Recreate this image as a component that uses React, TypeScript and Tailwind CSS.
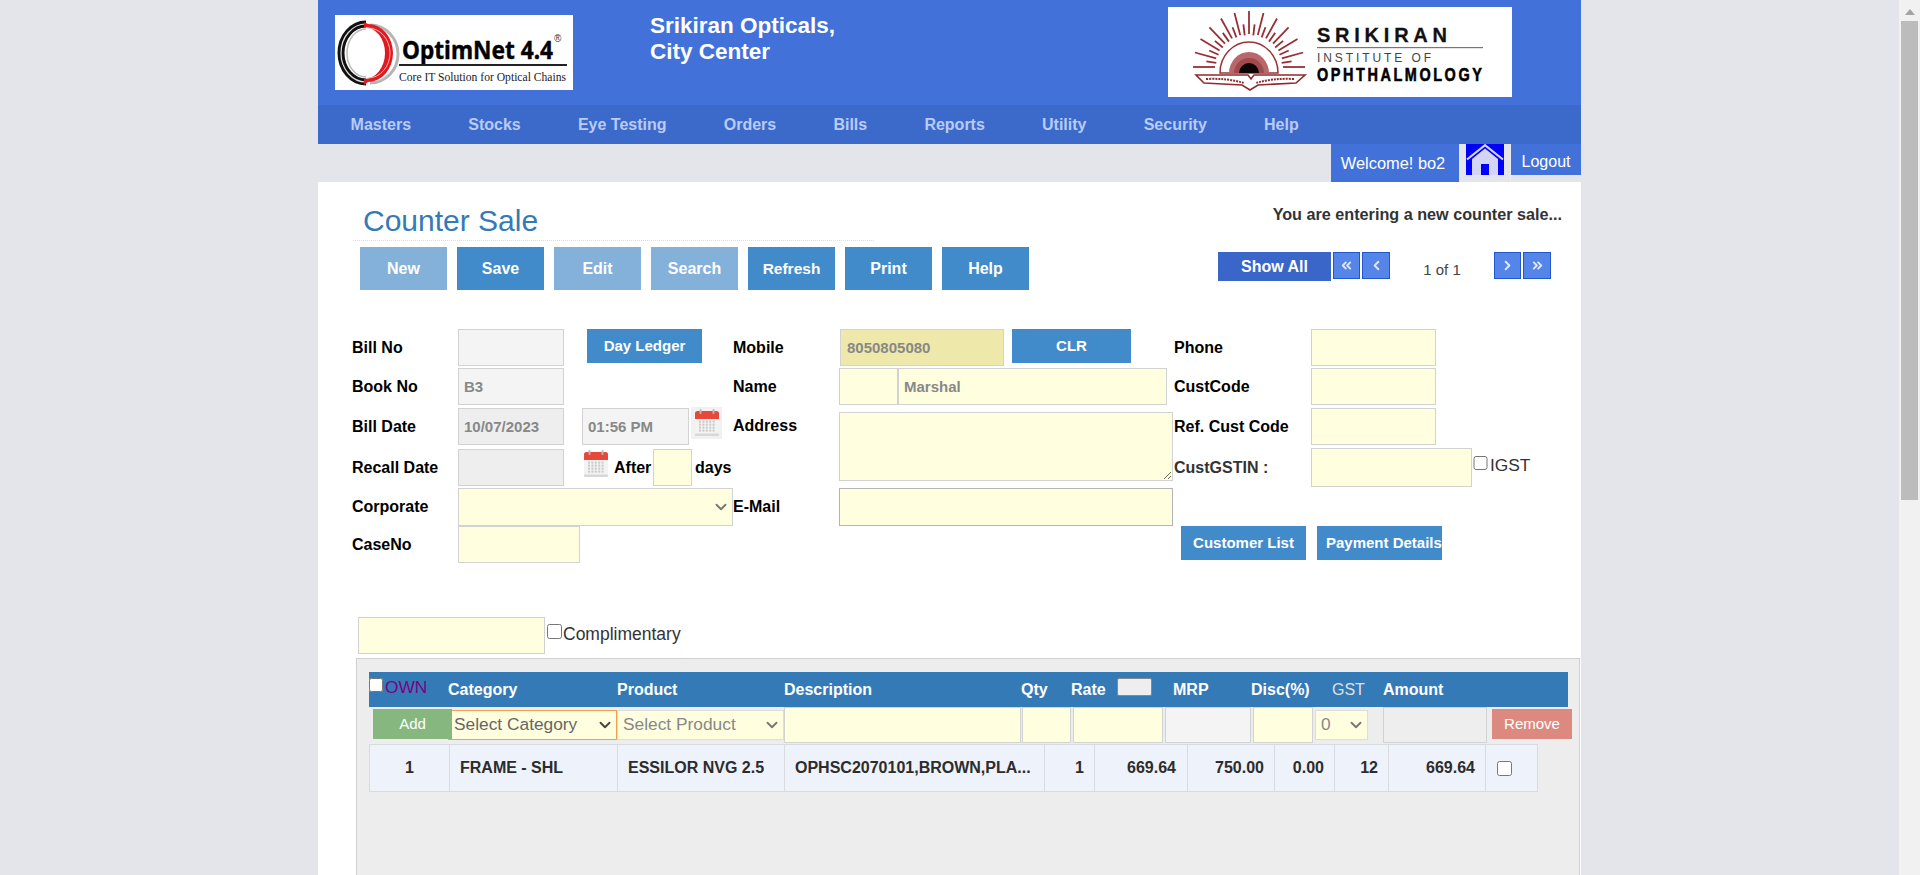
import React from "react";
import { ChevronDown, ChevronLeft, ChevronRight, ChevronsLeft, ChevronsRight } from "lucide-react";

const inputBase = "block border border-[#d2d2d2] outline-none px-[5px] text-[15px] font-bold text-[#888] m-0";
const yellow = "bg-[#ffffe0]";
const gray = "bg-[#f4f4f4]";
const grayDark = "bg-[#eeeeee]";

function Field({ className, value }: { className: string; value?: string }) {
  return <input readOnly defaultValue={value ?? ""} className={`${inputBase} ${className}`} />;
}

function Label({ children, className }: { children: React.ReactNode; className: string }) {
  return <div className={`flex items-center text-[16px] font-bold text-black shrink-0 ${className}`}>{children}</div>;
}

function Btn({ children, dim, className }: { children: React.ReactNode; dim?: boolean; className: string }) {
  return (
    <button className={`flex items-center justify-center text-white font-bold whitespace-nowrap overflow-hidden shrink-0 ${dim ? "bg-[#84b1da]" : "bg-[#428bca]"} ${className}`}>
      {children}
    </button>
  );
}

function Select({ label, className, selectClass, iconClass }: { label: string; className: string; selectClass: string; iconClass: string }) {
  return (
    <div className={`relative shrink-0 ${className}`}>
      <select className={`block appearance-none w-full h-full outline-none pl-[5px] bg-[#ffffe0] border ${selectClass}`}>
        <option>{label}</option>
      </select>
      <ChevronDown size={18} strokeWidth={2.5} className={`absolute right-[3px] top-1/2 -translate-y-1/2 pointer-events-none ${iconClass}`} />
    </div>
  );
}

function Calendar() {
  const dots: React.ReactNode[] = [];
  for (let r = 0; r < 4; r++) {
    for (let c = 0; c < 5; c++) {
      dots.push(<rect key={`${r}-${c}`} x={4 + c * 3.4} y={11.6 + r * 3} width="2" height="2" fill="#c9c9c9" />);
    }
  }
  return (
    <svg width="24" height="28" viewBox="0 0 24 28" className="block">
      <rect x="0" y="2" width="24" height="25" rx="2.5" fill="#f3f3f3" />
      <rect x="0" y="24.5" width="24" height="2.5" rx="1" fill="#d8d8d8" />
      <path d="M0 10V4.5A2.5 2.5 0 0 1 2.5 2h19A2.5 2.5 0 0 1 24 4.5V10z" fill="#e8483a" />
      <rect x="4.5" y="0" width="2" height="5" rx="1" fill="#b9b9b9" />
      <rect x="17.5" y="0" width="2" height="5" rx="1" fill="#b9b9b9" />
      {dots}
    </svg>
  );
}

function OptimLogo() {
  return (
    <svg width="238" height="75" viewBox="0 0 238 75" className="block bg-white shrink-0">
      <path d="M32 10 A28 29 0 0 1 32 68" fill="none" stroke="#b5b5b5" strokeWidth="3" transform="translate(3 0)" />
      <path d="M31 9 A25 29 0 0 0 31 67" fill="none" stroke="#111" strokeWidth="7" />
      <path d="M31 9 A25 29 0 0 0 31 67" fill="none" stroke="#ddd" strokeWidth="1.2" />
      <path d="M31 14 A19 24 0 0 0 31 62" fill="none" stroke="#bbb" strokeWidth="1.5" />
      <path d="M29 7 L33 9 A25 29 0 0 1 33 67 L29 70 Z M29 12 L29 64 A21 26 0 0 0 29 12 Z" fill="#e11a22" fillRule="evenodd" />
      <path d="M33 13 A22 25 0 0 1 33 63" fill="none" stroke="#f4b6b6" strokeWidth="1" />
      <text x="67" y="44" fontFamily="'Noto Sans', sans-serif" fontWeight="700" fontSize="25" fill="#000" stroke="#000" strokeWidth="0.4" textLength="151" lengthAdjust="spacingAndGlyphs">OptimNet 4.4</text>
      <text x="219" y="27" fontFamily="'Liberation Sans', sans-serif" fontSize="10" fill="#333">®</text>
      <rect x="64" y="49" width="168" height="2" fill="#222" />
      <text x="64" y="66" fontFamily="'Liberation Serif', serif" fontSize="12" fill="#222" textLength="167" lengthAdjust="spacingAndGlyphs">Core IT Solution for Optical Chains</text>
    </svg>
  );
}

function SrikiranLogo() {
  const cx = 81;
  const cy = 60;
  const rays: React.ReactNode[] = [];
  const n = 24;
  for (let i = 0; i <= n; i++) {
    const a = Math.PI * (i / n);
    const long = i % 2 === 0;
    const r1 = long ? 33 : 32;
    const r2 = long ? 56 : 43;
    rays.push(
      <line
        key={i}
        x1={cx + Math.cos(a) * r1 * 1.03}
        y1={cy - Math.sin(a) * r1}
        x2={cx + Math.cos(a) * r2}
        y2={cy - Math.sin(a) * r2}
        stroke="#963036"
        strokeWidth="1.8"
      />
    );
  }
  return (
    <svg width="344" height="90" viewBox="0 0 344 90" className="block bg-white shrink-0">
      {rays}
      <path d="M52 66 A29 31 0 0 1 110 66 Z" fill="#fff" stroke="#9a3338" strokeWidth="1.5" />
      <path d="M61 66 A20 21 0 0 1 101 66 Z" fill="#b8686a" />
      <path d="M66 66 A15 15 0 0 1 96 66 Z" fill="#a04a4e" />
      <path d="M71 66 A10 10 0 0 1 91 66 Z" fill="#0c0405" />
      <path d="M28 68 L80 68 L83 72 L86 68 L137 68 L128 76 L90 78 L82 83 L74 78 L36 76 Z" fill="#fff" stroke="#8f2a2f" strokeWidth="1.6" />
      <path d="M38 72 Q60 71 76 76" fill="none" stroke="#8f2a2f" strokeWidth="2" strokeDasharray="2 1" />
      <path d="M126 72 Q104 71 88 76" fill="none" stroke="#8f2a2f" strokeWidth="2" strokeDasharray="2 1" />
      <text x="149" y="35" fontFamily="'Liberation Sans', sans-serif" fontWeight="700" fontSize="20" fill="#111" stroke="#111" strokeWidth="0.3" textLength="130" lengthAdjust="spacing">SRIKIRAN</text>
      <rect x="149" y="40" width="166" height="1.2" fill="#777" />
      <text x="149" y="55" fontFamily="'Liberation Sans', sans-serif" fontSize="12" fill="#444" textLength="114" lengthAdjust="spacing">INSTITUTE OF</text>
      <text transform="translate(149 74) scale(0.76 1)" fontFamily="'Liberation Sans', sans-serif" fontWeight="700" fontSize="19" fill="#000" stroke="#000" strokeWidth="0.6" letterSpacing="3.4">OPHTHALMOLOGY</text>
    </svg>
  );
}

function HomeIcon() {
  return (
    <svg width="38" height="31" viewBox="0 0 38 31" className="block bg-[#0000ff] shrink-0">
      <path d="M6 15 L19 4.5 L32 15 V31 H23 V20 H15 V31 H6 Z" fill="#d4d4f4" />
      <path d="M1 15.5 L19 1.2 L37 15.5" fill="none" stroke="#d4d4f4" strokeWidth="2.2" />
    </svg>
  );
}

function PagerBtn({ children, className }: { children: React.ReactNode; className: string }) {
  return (
    <button className={`flex items-center justify-center h-[27px] bg-[#5585e8] border border-[#2257cc] text-[#dfe8fb] shrink-0 ${className}`}>
      {children}
    </button>
  );
}

const navItems = ["Masters", "Stocks", "Eye Testing", "Orders", "Bills", "Reports", "Utility", "Security", "Help"];
const topButtons: [string, boolean][] = [
  ["New", true],
  ["Save", false],
  ["Edit", true],
  ["Search", true],
  ["Refresh", false],
  ["Print", false],
  ["Help", false],
];

const cellBase = "flex items-center shrink-0 h-full border-r border-[#d8dbe0] text-[16px] font-bold text-[#2c2c2c] whitespace-nowrap";

export default function App() {
  return (
    <div className="flex h-[875px] overflow-hidden bg-[#e4e5ea] font-['Liberation_Sans',Arial,sans-serif] text-[16px]">
      <div className="flex-1 min-w-0 flex justify-center">
        <div className="w-[1263px] flex flex-col">
          {/* Header */}
          <header className="h-[105px] bg-[#4272d9] flex shrink-0">
            <div className="ml-[17px] mt-[15px]"><OptimLogo /></div>
            <div className="ml-[77px] mt-[13px] text-white font-bold text-[22.5px] leading-[26px] w-[518px]">
              Srikiran Opticals,
              <br />
              City Center
            </div>
            <div className="mt-[7px]"><SrikiranLogo /></div>
          </header>

          {/* Nav */}
          <nav className="h-[39px] bg-[#3c6acb] flex items-center pl-[4px] shrink-0">
            {navItems.map((n) => (
              <span key={n} className="px-[28.6px] text-[16px] font-bold text-[#b9cbf7] whitespace-nowrap">{n}</span>
            ))}
          </nav>

          {/* Welcome bar */}
          <div className="h-[38px] flex justify-end shrink-0">
            <div className="w-[128px] h-[38px] bg-[#4272d9] text-white text-[16.4px] pr-[4px] flex items-center justify-center">Welcome! bo2</div>
            <div className="w-[52px] h-[38px] pl-[7px] border-r border-[#ebebef]"><HomeIcon /></div>
            <div className="w-[70px] h-[31px] pt-[4px] bg-[#4272d9] text-white flex items-center justify-center">Logout</div>
          </div>

          {/* Content */}
          <main className="flex-1 bg-white min-h-0">
            <div className="flex justify-between items-start pt-[21px] h-[59px]">
              <div className="ml-[35px] w-[521px] h-[38px] border-b border-dotted border-[#dcdcdc] pl-[10px] text-[30px] leading-[35px] text-[#337ab7]">
                Counter Sale
              </div>
              <div className="mr-[19px] font-bold text-[16.2px] text-[#333] leading-[23px]">You are entering a new counter sale...</div>
            </div>

            <div className="mt-[6px] flex items-start h-[43px]">
              <div className="ml-[42px] flex gap-[10px]">
                {topButtons.map(([t, dim]) => (
                  <Btn key={t} dim={dim} className={`w-[87px] h-[43px] ${t === "Refresh" ? "text-[15.5px]" : "text-[16px]"}`}>{t}</Btn>
                ))}
              </div>
              <div className="ml-auto mr-[30px] mt-[5px] flex items-start">
                <button className="w-[113px] h-[29px] bg-[#3a66c9] text-white font-bold flex items-center justify-center">Show All</button>
                <PagerBtn className="ml-[2px] w-[27px]"><ChevronsLeft size={15} strokeWidth={3} /></PagerBtn>
                <PagerBtn className="ml-[2px] w-[28px]"><ChevronLeft size={15} strokeWidth={3} /></PagerBtn>
                <div className="w-[104px] h-[36px] flex items-center justify-center text-[15px] text-[#444]">1 of 1</div>
                <PagerBtn className="w-[27px]"><ChevronRight size={15} strokeWidth={3} /></PagerBtn>
                <PagerBtn className="ml-[2px] w-[28px]"><ChevronsRight size={15} strokeWidth={3} /></PagerBtn>
              </div>
            </div>

            {/* Form */}
            <div className="mt-[39px] ml-[34px] flex items-start h-[234px]">
              {/* Column A */}
              <div className="w-[381px] shrink-0">
                <div className="flex h-[37px]">
                  <Label className="w-[106px]">Bill No</Label>
                  <Field className={`w-[106px] h-[37px] ${gray}`} />
                  <Btn className="ml-[23px] w-[115px] h-[34px] text-[15px]">Day Ledger</Btn>
                </div>
                <div className="flex h-[37px] mt-[2px]">
                  <Label className="w-[106px]">Book No</Label>
                  <Field className={`w-[106px] h-[37px] ${gray}`} value="B3" />
                </div>
                <div className="flex h-[37px] mt-[3px]">
                  <Label className="w-[106px]">Bill Date</Label>
                  <Field className={`w-[106px] h-[37px] ${grayDark}`} value="10/07/2023" />
                  <Field className={`ml-[18px] w-[107px] h-[37px] ${gray}`} value="01:56 PM" />
                  <div className="ml-[2px] w-[31px] h-[32px] -mt-px bg-[#f1f1f1] flex items-center justify-center"><Calendar /></div>
                </div>
                <div className="flex h-[37px] mt-[4px]">
                  <Label className="w-[106px]">Recall Date</Label>
                  <Field className={`w-[106px] h-[37px] ${grayDark}`} />
                  <div className="ml-[20px] mt-px"><Calendar /></div>
                  <Label className="ml-[6px] w-[39px]">After</Label>
                  <Field className={`w-[39px] h-[37px] ${yellow}`} />
                  <Label className="ml-[3px]">days</Label>
                </div>
                <div className="flex h-[38px] mt-[2px]">
                  <Label className="w-[106px]">Corporate</Label>
                  <Select label="" className="w-[275px] h-[38px]" selectClass="border-[#d2d2d2]" iconClass="text-[#777]" />
                </div>
                <div className="flex h-[37px]">
                  <Label className="w-[106px]">CaseNo</Label>
                  <Field className={`w-[122px] h-[37px] ${yellow}`} />
                </div>
              </div>

              {/* Column B */}
              <div className="w-[441px] shrink-0">
                <div className="flex h-[37px]">
                  <Label className="w-[107px]">Mobile</Label>
                  <Field className="w-[164px] h-[37px] bg-[#eee8aa] !pl-[6px]" value="8050805080" />
                  <Btn className="ml-[8px] w-[119px] h-[34px] text-[15px]">CLR</Btn>
                </div>
                <div className="flex h-[37px] mt-[2px]">
                  <Label className="w-[106px]">Name</Label>
                  <Field className={`w-[59px] h-[37px] ${yellow}`} />
                  <Field className={`w-[269px] h-[37px] ${yellow}`} value="Marshal" />
                </div>
                <div className="flex mt-[7px] h-[69px]">
                  <Label className="w-[106px] h-[28px]">Address</Label>
                  <textarea readOnly className={`block w-[334px] h-[69px] border border-[#d2d2d2] outline-none ${yellow}`} />
                </div>
                <div className="flex h-[38px] mt-[7px]">
                  <Label className="w-[106px]">E-Mail</Label>
                  <input readOnly className={`block w-[334px] h-[38px] border border-[#b4b4b4] outline-none ${yellow}`} />
                </div>
              </div>

              {/* Column C */}
              <div className="shrink-0">
                <div className="flex h-[37px]">
                  <Label className="w-[137px]">Phone</Label>
                  <Field className={`w-[125px] h-[37px] ${yellow}`} />
                </div>
                <div className="flex h-[37px] mt-[2px]">
                  <Label className="w-[137px]">CustCode</Label>
                  <Field className={`w-[125px] h-[37px] ${yellow}`} />
                </div>
                <div className="flex h-[37px] mt-[3px]">
                  <Label className="w-[137px]">Ref. Cust Code</Label>
                  <Field className={`w-[125px] h-[37px] ${yellow}`} />
                </div>
                <div className="flex h-[39px] mt-[3px]">
                  <Label className="w-[137px] !text-[#333]">CustGSTIN :</Label>
                  <Field className={`w-[161px] h-[39px] ${yellow}`} />
                  <input type="checkbox" className="ml-px mt-[8px] w-[15px] h-[14px] m-0" />
                  <span className="ml-[2px] mt-[5px] text-[17.33px] leading-[24px] text-[#333]">IGST</span>
                </div>
                <div className="flex mt-[39px] ml-[7px]">
                  <Btn className="w-[125px] h-[34px] text-[15px]">Customer List</Btn>
                  <Btn className="ml-[11px] w-[125px] h-[34px] text-[15px] !justify-start pl-[9px]">Payment Details</Btn>
                </div>
              </div>
            </div>

            {/* Complimentary */}
            <div className="mt-[54px] ml-[40px] flex items-start h-[37px]">
              <Field className={`w-[187px] h-[37px] ${yellow}`} />
              <input type="checkbox" className="ml-[2px] mt-[7px] w-[15px] h-[15px]" />
              <span className="ml-px mt-[4px] text-[17.5px] leading-[26px] text-[#333]">Complimentary</span>
            </div>

            {/* Panel */}
            <div className="mt-[4px] ml-[38px] w-[1224px] h-[400px] bg-[#ededed] border border-[#d0d0d0] pt-[13px] pl-[12px]">
              <div className="w-[1199px] h-[35px] bg-[#337ab7] flex items-center text-white font-bold text-[16px] whitespace-nowrap">
                <div className="w-[79px] h-full flex items-start pt-[5px]">
                  <input type="checkbox" className="w-[14px] h-[14px] mt-px" />
                  <span className="ml-[2px] text-[#800080] font-normal text-[17.33px] leading-[20px]">OWN</span>
                </div>
                <div className="w-[169px]">Category</div>
                <div className="w-[167px]">Product</div>
                <div className="w-[237px]">Description</div>
                <div className="w-[50px]">Qty</div>
                <div className="w-[46px]">Rate</div>
                <div className="w-[56px] h-full pt-[6px]"><div className="w-[35px] h-[18px] bg-[#eeeeee] border border-[#888] rounded-[2px]" /></div>
                <div className="w-[78px]">MRP</div>
                <div className="w-[81px]">Disc(%)</div>
                <div className="w-[51px] font-normal text-[#e0e0e0]">GST</div>
                <div>Amount</div>
              </div>

              <div className="flex items-start h-[36px]">
                <div className="relative z-10 ml-[4px] mt-[2px] w-[79px] h-[30px] bg-[#85b77f] text-white text-[15px] flex items-center justify-center shrink-0">Add</div>
                <Select label="Select Category" className="-ml-[4px] mt-[3px] w-[169px] h-[30px]" selectClass="border-[#f0a050] text-[17.33px] text-[#666]" iconClass="text-[#444]" />
                <Select label="Select Product" className="mt-[3px] w-[167px] h-[30px]" selectClass="border-[#ddd] text-[17.33px] text-[#888]" iconClass="text-[#777]" />
                <Field className={`w-[237px] h-[36px] shrink-0 ${yellow}`} />
                <Field className={`ml-px w-[49px] h-[36px] shrink-0 ${yellow}`} />
                <Field className={`ml-[2px] w-[90px] h-[36px] shrink-0 ${yellow}`} />
                <Field className={`ml-[2px] w-[86px] h-[36px] shrink-0 ${gray}`} />
                <Field className={`ml-[2px] w-[60px] h-[36px] shrink-0 ${yellow}`} />
                <Select label="0" className="ml-[2px] mt-[3px] w-[53px] h-[30px]" selectClass="border-[#ddd] text-[17.33px] text-[#888]" iconClass="text-[#777]" />
                <Field className={`ml-[15px] w-[104px] h-[36px] shrink-0 ${grayDark}`} />
                <div className="ml-[5px] mt-[2px] w-[80px] h-[30px] bg-[#dc8a80] text-white text-[15px] flex items-center justify-center shrink-0">Remove</div>
              </div>

              <div className="mt-px w-[1169px] h-[48px] flex bg-[#eef2fb] border border-[#d8dbe0]">
                <div className={`${cellBase} w-[80px] justify-center`}>1</div>
                <div className={`${cellBase} w-[168px] pl-[10px]`}>FRAME - SHL</div>
                <div className={`${cellBase} w-[167px] pl-[10px]`}>ESSILOR NVG 2.5</div>
                <div className={`${cellBase} w-[260px] pl-[10px]`}>OPHSC2070101,BROWN,PLA...</div>
                <div className={`${cellBase} w-[50px] justify-end pr-[10px]`}>1</div>
                <div className={`${cellBase} w-[93px] justify-end pr-[11px]`}>669.64</div>
                <div className={`${cellBase} w-[87px] justify-end pr-[10px]`}>750.00</div>
                <div className={`${cellBase} w-[60px] justify-end pr-[10px]`}>0.00</div>
                <div className={`${cellBase} w-[54px] justify-end pr-[10px]`}>12</div>
                <div className={`${cellBase} w-[97px] justify-end pr-[10px]`}>669.64</div>
                <div className="flex items-center pl-[11px]"><input type="checkbox" className="w-[15px] h-[15px]" /></div>
              </div>
            </div>
          </main>
        </div>
      </div>

      {/* Scrollbar drawn as part of the picture */}
      <div className="w-[21px] bg-[#f1f1f1] shrink-0 flex flex-col items-center">
        <svg width="10" height="6" viewBox="0 0 10 6" className="mt-[9px]"><path d="M5 0 L10 6 H0 Z" fill="#a3a3a3" /></svg>
        <div className="mt-[6px] w-[17px] h-[479px] bg-[#bcbcbc]" />
      </div>
    </div>
  );
}
